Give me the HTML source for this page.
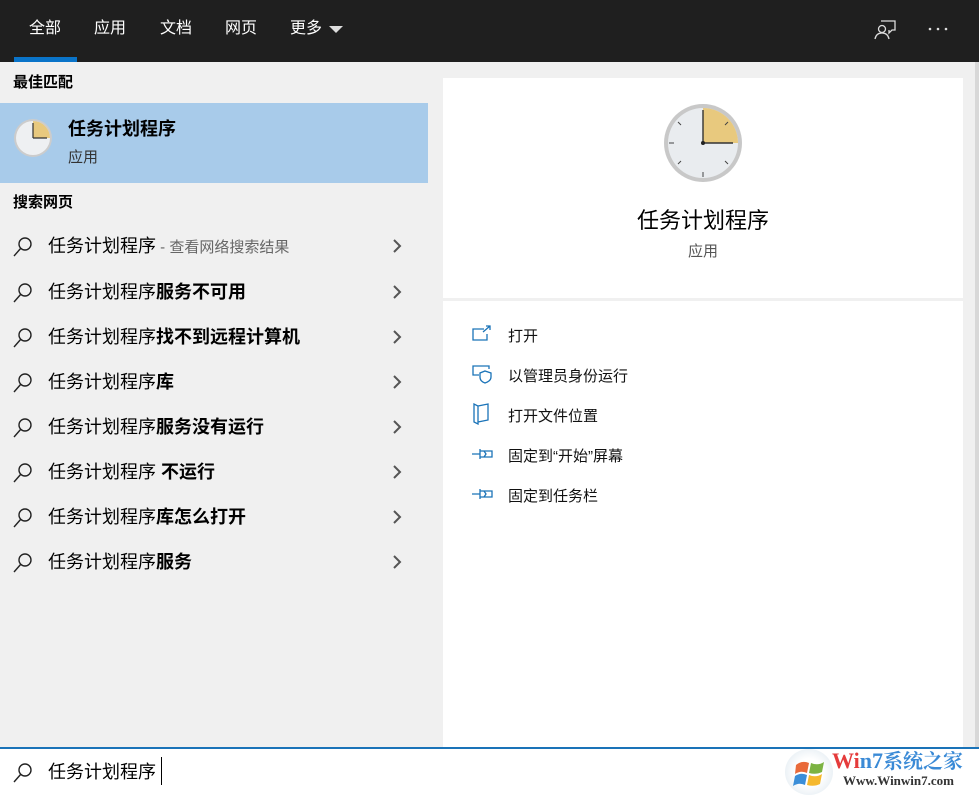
<!DOCTYPE html>
<html><head><meta charset="utf-8"><style>
*{margin:0;padding:0;box-sizing:border-box}
body{width:979px;height:795px;overflow:hidden;background:#f0f0f0;font-family:"Liberation Sans","Noto Sans CJK SC",sans-serif;color:#000;position:relative}
.top{position:absolute;left:0;top:0;width:979px;height:62px;background:#1f1f1f}
.tab{position:absolute;top:18px;color:#fff;font-size:16px;line-height:22px}
.ul{position:absolute;left:14px;top:57px;width:63px;height:5px;background:#0a74c9}
.abs{position:absolute}
.hd{position:absolute;left:13px;font-size:15px;font-weight:bold;line-height:20px}
.sel{position:absolute;left:0;top:103px;width:428px;height:80px;background:#a8cbea}
.row{position:absolute;left:0;width:428px;height:45px}
.row .t{position:absolute;left:48px;top:11px;font-size:18px;line-height:24px;white-space:nowrap}
.row svg.s{position:absolute;left:12px;top:13px}
.row svg.c{position:absolute;left:391px;top:15px}
.card{position:absolute;left:443px;background:#fff;width:520px}
.act{position:absolute;left:508px;font-size:15px;line-height:20px;color:#111}
.ai{position:absolute;left:472px}
.bot{position:absolute;left:0;top:747px;width:979px;height:48px;background:#fff;border-top:2px solid #1a73b8}
</style></head><body>
<div class="top">
<div class="tab" style="left:29px">全部</div>
<div class="tab" style="left:94px">应用</div>
<div class="tab" style="left:160px">文档</div>
<div class="tab" style="left:225px">网页</div>
<div class="tab" style="left:290px">更多</div>
<svg class="abs" style="left:329px;top:25px" width="14" height="9"><path d="M0 1H14L7 8Z" fill="#ddd"/></svg>
<div class="ul"></div>
<svg class="abs" style="left:873px;top:17px" width="24" height="24" fill="none" stroke="#ddd" stroke-width="1.3"><path d="M8 4H22V13H19L16 16V13"/><circle cx="9" cy="12" r="3.5"/><path d="M2 22C3 17 6 16 9 16S15 17 16 22"/></svg>
<svg class="abs" style="left:928px;top:27px" width="20" height="4" fill="#ddd"><circle cx="2" cy="2" r="1.3"/><circle cx="10" cy="2" r="1.3"/><circle cx="18" cy="2" r="1.3"/></svg>
</div>
<div class="hd" style="top:73px">最佳匹配</div>
<div class="sel">
<svg class="abs" style="left:13px;top:15px" width="40" height="40"><circle cx="20" cy="20" r="19" fill="#ccc"/><circle cx="20" cy="20" r="17" fill="#eef0f2"/><path d="M20 20V3A17 17 0 0 1 37 20Z" fill="#e8c97e"/><path d="M20 20V5M20 20H34" stroke="#333" stroke-width="1.2"/></svg>
<div class="abs" style="left:68px;top:14px;font-size:18px;font-weight:bold;line-height:24px">任务计划程序</div>
<div class="abs" style="left:68px;top:45px;font-size:15px;color:#333;line-height:20px">应用</div>
</div>
<div class="hd" style="top:193px">搜索网页</div>

<div class="row" style="top:223px"><svg class="s" width="22" height="22" fill="none" stroke="#222" stroke-width="1.4"><circle cx="13" cy="8" r="6"/><path d="M9 12L2 20"/></svg><div class="t">任务计划程序<span style="font-size:15px;color:#666"> - 查看网络搜索结果</span></div><svg class="c" width="12" height="16" fill="none" stroke="#555" stroke-width="2"><path d="M3 2L9 8L3 14"/></svg></div>
<div class="row" style="top:269px"><svg class="s" width="22" height="22" fill="none" stroke="#222" stroke-width="1.4"><circle cx="13" cy="8" r="6"/><path d="M9 12L2 20"/></svg><div class="t">任务计划程序<b>服务不可用</b></div><svg class="c" width="12" height="16" fill="none" stroke="#555" stroke-width="2"><path d="M3 2L9 8L3 14"/></svg></div>
<div class="row" style="top:314px"><svg class="s" width="22" height="22" fill="none" stroke="#222" stroke-width="1.4"><circle cx="13" cy="8" r="6"/><path d="M9 12L2 20"/></svg><div class="t">任务计划程序<b>找不到远程计算机</b></div><svg class="c" width="12" height="16" fill="none" stroke="#555" stroke-width="2"><path d="M3 2L9 8L3 14"/></svg></div>
<div class="row" style="top:359px"><svg class="s" width="22" height="22" fill="none" stroke="#222" stroke-width="1.4"><circle cx="13" cy="8" r="6"/><path d="M9 12L2 20"/></svg><div class="t">任务计划程序<b>库</b></div><svg class="c" width="12" height="16" fill="none" stroke="#555" stroke-width="2"><path d="M3 2L9 8L3 14"/></svg></div>
<div class="row" style="top:404px"><svg class="s" width="22" height="22" fill="none" stroke="#222" stroke-width="1.4"><circle cx="13" cy="8" r="6"/><path d="M9 12L2 20"/></svg><div class="t">任务计划程序<b>服务没有运行</b></div><svg class="c" width="12" height="16" fill="none" stroke="#555" stroke-width="2"><path d="M3 2L9 8L3 14"/></svg></div>
<div class="row" style="top:449px"><svg class="s" width="22" height="22" fill="none" stroke="#222" stroke-width="1.4"><circle cx="13" cy="8" r="6"/><path d="M9 12L2 20"/></svg><div class="t">任务计划程序 <b>不运行</b></div><svg class="c" width="12" height="16" fill="none" stroke="#555" stroke-width="2"><path d="M3 2L9 8L3 14"/></svg></div>
<div class="row" style="top:494px"><svg class="s" width="22" height="22" fill="none" stroke="#222" stroke-width="1.4"><circle cx="13" cy="8" r="6"/><path d="M9 12L2 20"/></svg><div class="t">任务计划程序<b>库怎么打开</b></div><svg class="c" width="12" height="16" fill="none" stroke="#555" stroke-width="2"><path d="M3 2L9 8L3 14"/></svg></div>
<div class="row" style="top:539px"><svg class="s" width="22" height="22" fill="none" stroke="#222" stroke-width="1.4"><circle cx="13" cy="8" r="6"/><path d="M9 12L2 20"/></svg><div class="t">任务计划程序<b>服务</b></div><svg class="c" width="12" height="16" fill="none" stroke="#555" stroke-width="2"><path d="M3 2L9 8L3 14"/></svg></div>

<div class="card" style="top:78px;height:220px">
<svg class="abs" style="left:220px;top:25px" width="80" height="80"><circle cx="40" cy="40" r="39" fill="#c8c8c8"/><circle cx="40" cy="40" r="35" fill="#e9ecef"/><path d="M40 40V5A35 35 0 0 1 75 40Z" fill="#e8c97e"/><g stroke="#444" stroke-width="1"><path d="M40 69V74M11 40H6M62 58L65 61M18 58L15 61M18 22L15 19M62 22L65 19"/></g><path d="M40 40V7M40 40H70" stroke="#333" stroke-width="1.4"/><circle cx="40" cy="40" r="2" fill="#222"/></svg>
<div class="abs" style="left:0;width:520px;text-align:center;top:128px;font-size:22px;line-height:30px">任务计划程序</div>
<div class="abs" style="left:0;width:520px;text-align:center;top:164px;font-size:15px;color:#555;line-height:20px">应用</div>
</div>
<div class="card" style="top:301px;height:446px"></div>
<svg class="ai" style="top:325px" width="20" height="18" fill="none" stroke="#1a73b8" stroke-width="1.3"><path d="M12 4H1V15H15V9M11 7L18 1M14 1H18V5"/></svg>
<div class="act" style="top:327px">打开</div>
<svg class="ai" style="top:365px" width="20" height="20" fill="none" stroke="#1a73b8" stroke-width="1.3"><path d="M7 10H1V1H17V4"/><path d="M13 6L19 8V12C19 15 16 17 13 18C10 17 8 15 8 12V8Z"/></svg>
<div class="act" style="top:367px">以管理员身份运行</div>
<svg class="ai" style="top:403px" width="18" height="22" fill="none" stroke="#1a73b8" stroke-width="1.3"><path d="M2 1V19L6 21V3ZM6 3L16 1V17L6 19"/></svg>
<div class="act" style="top:407px">打开文件位置</div>
<svg class="ai" style="top:447px" width="22" height="14" fill="none" stroke="#1a73b8" stroke-width="1.3"><path d="M0 7H8M8 2V12M8 4H20V10H8M12 4L14 7L12 10"/></svg>
<div class="act" style="top:447px">固定到“开始”屏幕</div>
<svg class="ai" style="top:487px" width="22" height="14" fill="none" stroke="#1a73b8" stroke-width="1.3"><path d="M0 7H8M8 2V12M8 4H20V10H8M12 4L14 7L12 10"/></svg>
<div class="act" style="top:487px">固定到任务栏</div>
<div class="abs" style="left:975px;top:62px;width:4px;height:685px;background:#d8d8d8"></div>

<div class="bot">
<svg class="abs" style="left:12px;top:13px" width="22" height="22" fill="none" stroke="#222" stroke-width="1.4"><circle cx="13" cy="8" r="6"/><path d="M9 12L2 20"/></svg>
<div class="abs" style="left:48px;top:11px;font-size:18px;line-height:24px">任务计划程序</div>
<div class="abs" style="left:161px;top:8px;width:1px;height:28px;background:#000"></div>
<div class="abs" style="left:785px;top:0;width:48px;height:46px;border-radius:50%;background:radial-gradient(circle,#fff 40%,#dbe6ee 100%)"></div>
<svg class="abs" style="left:793px;top:8px" width="34" height="32"><path d="M3 8Q9 3 16 6L14 16Q8 13 2 17Z" fill="#e96a3a"/><path d="M18 6Q25 9 31 5L29 15Q23 18 16 16Z" fill="#7cb342"/><path d="M2 19Q8 15 14 18L12 28Q6 25 0 29Z" fill="#3b8ed8"/><path d="M16 18Q23 21 29 17L27 27Q21 30 14 28Z" fill="#f5b82e"/></svg>
<div class="abs" style="left:832px;top:-1px;font-size:22px;font-weight:bold;line-height:26px;color:#e53b3b;font-family:'Liberation Serif','Noto Serif CJK SC',serif">Wi<span style="color:#3a8ad6">n</span><span style="color:#3a8ad6">7</span><span style="color:#3a8ad6;font-size:20px">系统之家</span></div>
<div class="abs" style="left:843px;top:24px;font-size:13px;line-height:16px;color:#333;font-family:'Liberation Serif',serif;font-weight:bold">Www.Winwin7.com</div>
</div>
</body></html>
